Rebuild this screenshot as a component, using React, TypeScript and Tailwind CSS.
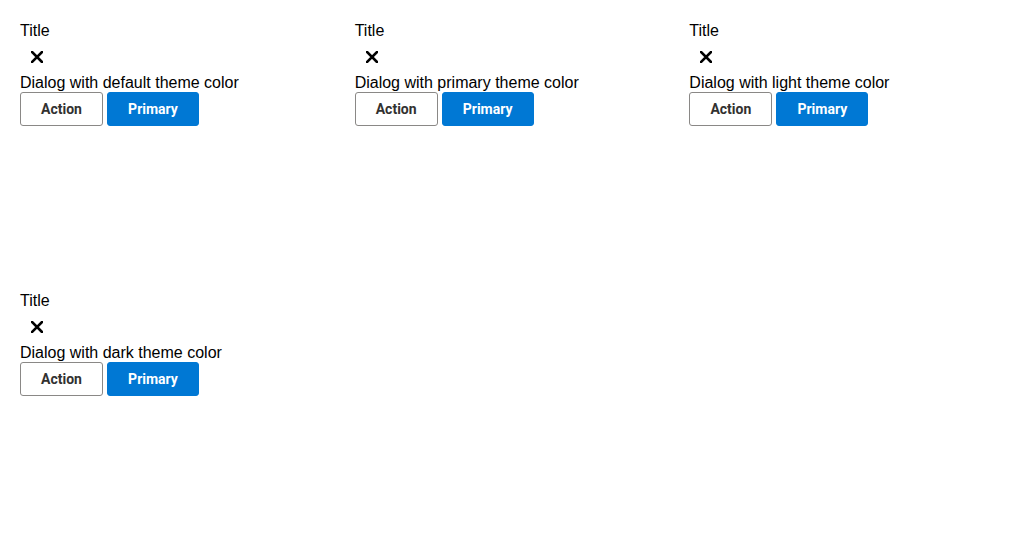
const themes = ["default", "primary", "light", "dark"];

function CloseIcon() {
  return (
    <svg width="12" height="12" viewBox="0 0 12 12" fill="none">
      <path d="M1 1L11 11M11 1L1 11" stroke="#000" strokeWidth="2.6" strokeLinecap="square" />
    </svg>
  );
}

function DialogSample({ theme }: { theme: string }) {
  return (
    <div className="h-[250px] font-['Liberation_Sans',Arial,sans-serif] text-base text-black">
      <div className="mt-[2px] leading-[18px]">Title</div>
      <button className="flex h-[33px] w-[34px] items-center justify-center">
        <CloseIcon />
      </button>
      <p className="mt-px leading-[18px]">Dialog with {theme} theme color</p>
      <div className="flex gap-1 font-['Roboto',sans-serif] text-sm font-bold">
        <button className="h-[34px] w-[83px] rounded-[3px] border border-[#8a8886] bg-white text-[#323130]">
          Action
        </button>
        <button className="h-[34px] w-[92px] rounded-[3px] border border-[#0078d4] bg-[#0078d4] text-white">
          Primary
        </button>
      </div>
    </div>
  );
}

export default function App() {
  return (
    <div className="grid min-h-[560px] grid-cols-3 content-start gap-5 bg-white p-5">
      {themes.map((t) => (
        <DialogSample key={t} theme={t} />
      ))}
    </div>
  );
}
